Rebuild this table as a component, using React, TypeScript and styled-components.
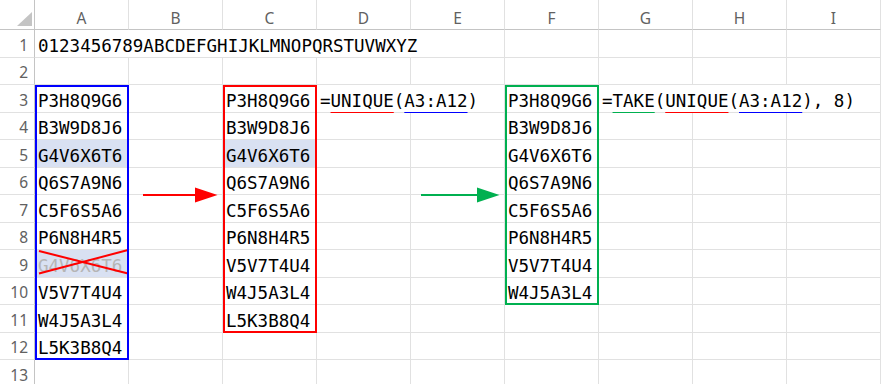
import React from "react";
import styled, { createGlobalStyle } from "styled-components";

const GlobalStyle = createGlobalStyle`
  html, body { margin: 0; padding: 0; background: #fff; }
  body { overflow: hidden; }
`;

const COLS = ["A", "B", "C", "D", "E", "F", "G", "H", "I"];
const ROW_COUNT = 13;

const source = [
  "P3H8Q9G6", "B3W9D8J6", "G4V6X6T6", "Q6S7A9N6", "C5F6S5A6",
  "P6N8H4R5", "G4V6X6T6", "V5V7T4U4", "W4J5A3L4", "L5K3B8Q4",
];
const unique = source.filter((v, i) => source.indexOf(v) === i);

type CellData = { text: React.ReactNode; span?: number; fill?: boolean; faded?: boolean };

// content keyed by "col,row" (col 0 = A, row 1-based)
const content: Record<string, CellData> = {};
content["0,1"] = { text: "0123456789ABCDEFGHIJKLMNOPQRSTUVWXYZ", span: 5 };
source.forEach((v, i) => {
  content[`0,${i + 3}`] = { text: v, fill: i === 2 || i === 6, faded: i === 6 };
});
unique.forEach((v, i) => {
  content[`2,${i + 3}`] = { text: v, fill: i === 2 };
});
unique.slice(0, 8).forEach((v, i) => {
  content[`5,${i + 3}`] = { text: v };
});

const Sheet = styled.div`
  display: grid;
  grid-template-columns: 35px repeat(9, 94px);
  grid-template-rows: 30px repeat(${ROW_COUNT}, 27.5px);
  width: 881px;
  height: 384px;
  overflow: hidden;
  background: #fff;
`;

const Corner = styled.div`
  grid-column: 1;
  grid-row: 1;
  border-right: 1px solid #c4c4c4;
  border-bottom: 1px solid #c4c4c4;
  display: flex;
  align-items: flex-end;
  justify-content: flex-end;
  padding: 0 2px 3px 0;
`;

const ColHead = styled.div<{ $col: number }>`
  grid-column: ${(p) => p.$col};
  grid-row: 1;
  border-right: 1px solid #e1e1e1;
  border-bottom: 1px solid #c4c4c4;
  display: flex;
  align-items: flex-end;
  justify-content: center;
  padding-bottom: 2px;
  font-family: "Noto Sans", "Open Sans", sans-serif;
  font-size: 15.5px;
  line-height: 18px;
  color: #616161;
`;

const RowHead = styled.div<{ $row: number }>`
  grid-column: 1;
  grid-row: ${(p) => p.$row + 1};
  border-right: 1px solid #c4c4c4;
  border-bottom: 1px solid #e1e1e1;
  display: flex;
  align-items: flex-end;
  justify-content: flex-end;
  padding: 0 6px 2px 0;
  font-family: "Noto Sans", "Open Sans", sans-serif;
  font-size: 15.5px;
  line-height: 20px;
  color: #616161;
`;

const Cell = styled.div<{ $col: number; $row: number; $span: number; $fill?: boolean; $faded?: boolean }>`
  grid-column: ${(p) => p.$col + 2} / span ${(p) => p.$span};
  grid-row: ${(p) => p.$row + 1};
  border-right: 1px solid #e1e1e1;
  border-bottom: 1px solid #e1e1e1;
  background: ${(p) => (p.$fill ? "#d9e1f2" : "#fff")};
  color: ${(p) => (p.$faded ? "#b5b5b5" : "#000")};
  display: flex;
  align-items: flex-end;
  padding: 0 0 1px 3px;
  font-family: "DejaVu Sans Mono", "Liberation Mono", monospace;
  font-size: 17.5px;
  line-height: 20px;
  white-space: nowrap;
`;

const Ref = styled.span<{ $line: string }>`
  text-decoration: underline;
  text-decoration-color: ${(p) => p.$line};
  text-decoration-thickness: 2px;
  text-underline-offset: 4.5px;
`;

const RangeBox = styled.div<{ $col: number; $row: number; $rowEnd: number; $color: string }>`
  grid-column: ${(p) => p.$col + 2};
  grid-row: ${(p) => p.$row + 1} / ${(p) => p.$rowEnd + 2};
  border: 2px solid ${(p) => p.$color};
  z-index: 3;
  pointer-events: none;
`;

const Mark = styled.svg<{ $col: number; $row: number; $rows: number }>`
  grid-column: ${(p) => p.$col + 2};
  grid-row: ${(p) => p.$row + 1} / span ${(p) => p.$rows};
  width: 100%;
  height: 100%;
  overflow: visible;
  z-index: 2;
  pointer-events: none;
`;

const Arrow = ({ col, color, from }: { col: number; color: string; from: number }) => (
  <Mark $col={col} $row={6} $rows={2} viewBox="0 0 94 55">
    <line x1={from} y1={27} x2={68} y2={27} stroke={color} strokeWidth={2.2} />
    <polygon points="66,19.5 88.5,27 66,34.5" fill={color} />
  </Mark>
);

const UNIQUE_F = (
  <>
    =<Ref $line="#ff0000">UNIQUE</Ref>(<Ref $line="#0000ff">A3:A12</Ref>)
  </>
);

const TAKE_F = (
  <>
    =<Ref $line="#00b050">TAKE</Ref>(<Ref $line="#ff0000">UNIQUE</Ref>(<Ref $line="#0000ff">A3:A12</Ref>), 8)
  </>
);

content["3,3"] = { text: UNIQUE_F, span: 2 };
content["6,3"] = { text: TAKE_F, span: 3 };

export default function App() {
  const cells: React.ReactNode[] = [];
  for (let r = 1; r <= ROW_COUNT; r++) {
    let c = 0;
    while (c < COLS.length) {
      const d = content[`${c},${r}`];
      const span = d?.span ?? 1;
      cells.push(
        <Cell key={`${c}-${r}`} $col={c} $row={r} $span={span} $fill={d?.fill} $faded={d?.faded}>
          {d?.text}
        </Cell>
      );
      c += span;
    }
  }

  return (
    <>
      <GlobalStyle />
      <Sheet>
        <Corner>
          <svg width="15" height="14" viewBox="0 0 15 14">
            <polygon points="15,0 15,14 0,14" fill="#c4c4c4" />
          </svg>
        </Corner>
        {COLS.map((l, i) => (
          <ColHead key={l} $col={i + 2}>{l}</ColHead>
        ))}
        {Array.from({ length: ROW_COUNT }, (_, i) => (
          <RowHead key={i} $row={i + 1}>{i + 1}</RowHead>
        ))}
        {cells}

        <Mark $col={0} $row={9} $rows={1} viewBox="0 0 94 27.5" preserveAspectRatio="none">
          <line x1={4} y1={1} x2={93} y2={23.5} stroke="#ff0000" strokeWidth={2} />
          <line x1={93} y1={0} x2={4} y2={23.5} stroke="#ff0000" strokeWidth={2} />
        </Mark>
        <Arrow col={1} color="#ff0000" from={14} />
        <Arrow col={4} color="#00b050" from={10} />

        <RangeBox $col={0} $row={3} $rowEnd={12} $color="#0000ff" />
        <RangeBox $col={2} $row={3} $rowEnd={11} $color="#ff0000" />
        <RangeBox $col={5} $row={3} $rowEnd={10} $color="#00b050" />
      </Sheet>
    </>
  );
}
